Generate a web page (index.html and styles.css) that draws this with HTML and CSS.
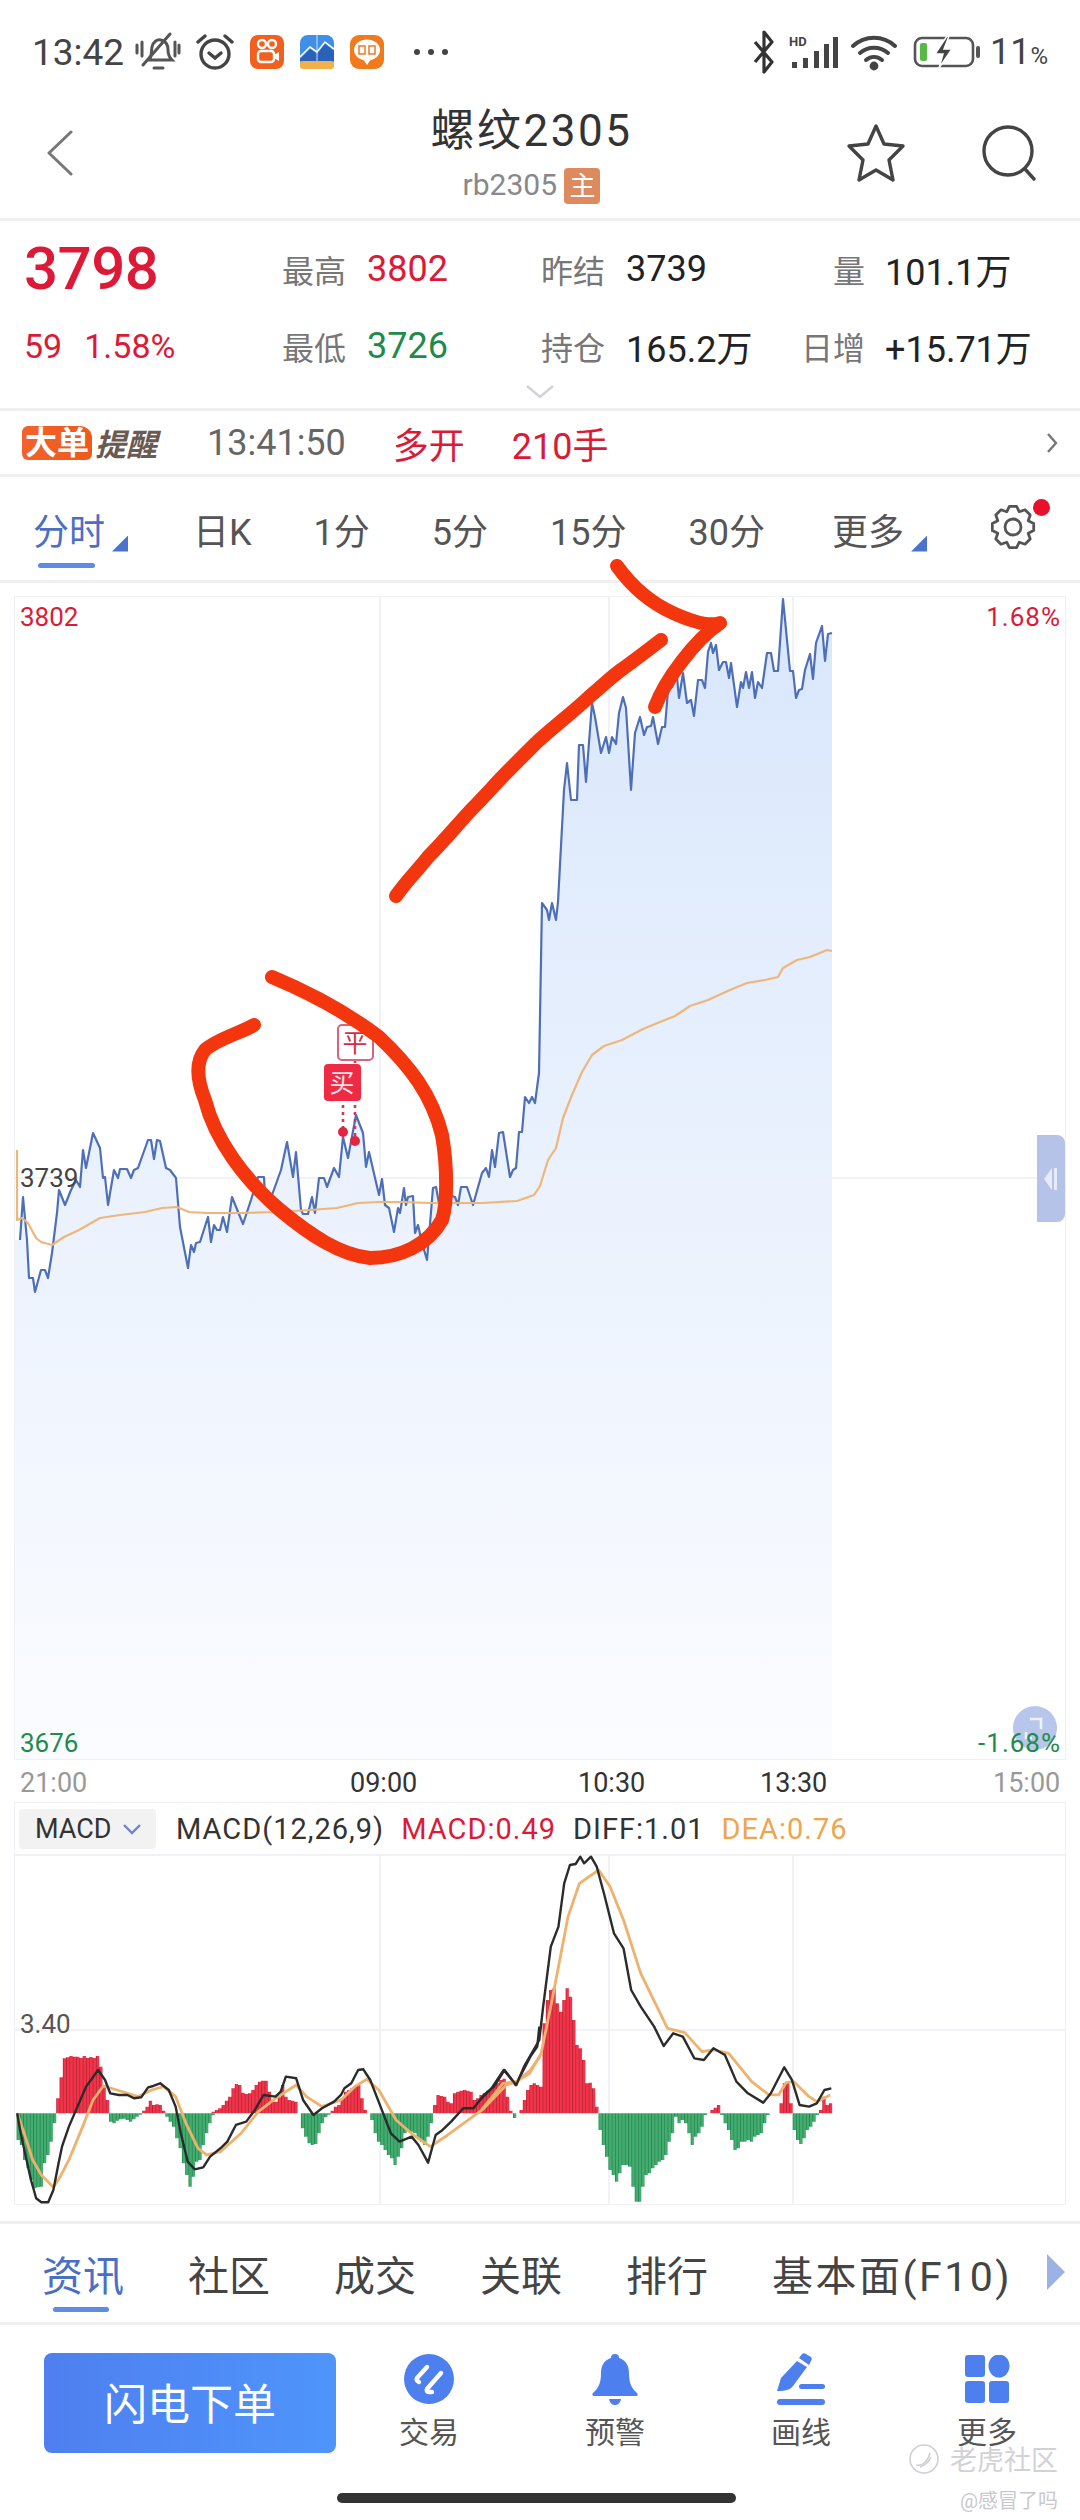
FILE: index.html
```html
<!DOCTYPE html>
<html lang="zh-CN">
<head>
    <meta charset="UTF-8">
    <meta name="viewport" content="width=device-width, initial-scale=1.0">
    <title>螺纹2305</title>
    <link rel="stylesheet" href="styles.css">
</head>
<body>
<div class="page">

    <!-- status bar -->
    <div class="status">
        <span class="clock">13:42</span>
        <svg class="st-bell" width="46" height="42" viewBox="0 0 46 42" fill="none" stroke="#555" stroke-width="3" stroke-linecap="round">
            <path d="M14 29c3-3 2-8 3-13 1-5 5-8 9-7 5 1 7 5 7 10 0 4 1 7 4 10z"/>
            <path d="M8 34L35 3"/><path d="M2 14v8M7 11v14M40 11v14M44 14v8"/><path d="M19 37h9"/>
        </svg>
        <svg class="st-alarm" width="38" height="38" viewBox="0 0 38 38" fill="none" stroke="#444" stroke-width="3.4" stroke-linecap="round">
            <circle cx="19" cy="21" r="14"/><path d="M13 20l6 5 6-5"/><path d="M2 9l7-6M36 9l-7-6"/>
        </svg>
        <svg class="st-app" width="34" height="34" viewBox="0 0 34 34">
            <rect width="34" height="34" rx="8" fill="#f2601f"/>
            <circle cx="12" cy="9" r="4" fill="none" stroke="#fff" stroke-width="2.4"/>
            <circle cx="22" cy="9" r="4" fill="none" stroke="#fff" stroke-width="2.4"/>
            <rect x="8" y="16" width="16" height="11" rx="3" fill="none" stroke="#fff" stroke-width="2.4"/>
            <path d="M24 20l5-3v9l-5-3z" fill="#fff"/>
        </svg>
        <svg class="st-app" width="34" height="34" viewBox="0 0 34 34">
            <rect width="34" height="34" rx="8" fill="#3f8fe6"/>
            <rect y="26" width="34" height="8" rx="3" fill="#f2b04a"/>
            <path d="M0 24l10-10 7 5 8-10 9 7v10H0z" fill="#2a62b8"/>
            <path d="M0 22l10-10 7 5 8-10 9 7" fill="none" stroke="#fff" stroke-width="1.6"/>
            <path d="M17 0v26" stroke="#cfe3f8" stroke-width="1"/>
        </svg>
        <svg class="st-app" width="34" height="34" viewBox="0 0 34 34">
            <rect width="34" height="34" rx="9" fill="#f07a1c"/>
            <ellipse cx="17" cy="15" rx="13" ry="10.5" fill="#fff"/>
            <path d="M13 24l4 6 4-6z" fill="#fff"/>
            <path d="M9 11h6v8H9zM19 11h6v8h-6z" fill="none" stroke="#ee7a2a" stroke-width="1.5"/>
        </svg>
        <span class="st-dots"><i></i><i></i><i></i></span>
        <span class="st-fill"></span>
        <svg width="24" height="46" viewBox="0 0 24 46" fill="none" stroke="#333" stroke-width="3.2" stroke-linejoin="round">
            <path d="M3 13l17 20-8 10V3l8 10L3 33"/>
        </svg>
        <svg class="st-signal" width="50" height="36" viewBox="0 0 50 36">
            <text x="0" y="12" class="st-hd">HD</text>
            <path d="M3 28h5v6H3zM14 24h5v10h-5zM25 17h5v17h-5zM35 10h5v24h-5zM44 3h5v31h-5z" fill="#444"/>
        </svg>
        <svg class="st-wifi" width="46" height="38" viewBox="0 0 46 38" fill="none" stroke="#444" stroke-width="4" stroke-linecap="round">
            <path d="M2 13c12-11 30-11 42 0"/><path d="M9 20c8-7 20-7 28 0"/><path d="M15 27c5-4 11-4 16 0"/>
            <circle cx="23" cy="33" r="2.4" fill="#444"/>
        </svg>
        <svg class="st-batt" width="68" height="32" viewBox="0 0 68 32">
            <rect x="2" y="2" width="58" height="28" rx="7" fill="none" stroke="#555" stroke-width="2.6"/>
            <rect x="7" y="7" width="7" height="18" rx="2" fill="#58b947"/>
            <rect x="63" y="10" width="4" height="12" rx="2" fill="#555"/>
            <path d="M34 0L22 18h8l-4 14 13-19h-8l5-13z" fill="#444" stroke="#fff" stroke-width="1.5"/>
        </svg>
        <span class="st-pct">11<small>%</small></span>
    </div>

    <!-- title -->
    <div class="topbar">
        <svg class="back" width="26" height="46" viewBox="0 0 26 46" fill="none" stroke="#777" stroke-width="3" stroke-linecap="round" stroke-linejoin="round">
            <path d="M24 2L2 23l22 21"/>
        </svg>
        <div class="topbar-title">
            <div class="name">螺纹2305</div>
            <div class="code">rb2305 <span class="main-tag">主</span></div>
        </div>
        <svg class="star" width="60" height="60" viewBox="0 0 60 60" fill="none" stroke="#444" stroke-width="3.4" stroke-linejoin="round">
            <path d="M30 3l8 18 19 2-14 14 4 20-17-10-17 10 4-20L3 23l19-2z"/>
        </svg>
        <svg class="search" width="56" height="56" viewBox="0 0 56 56" fill="none" stroke="#444" stroke-width="3.4" stroke-linecap="round">
            <circle cx="26" cy="26" r="24"/><path d="M43 44l9 10"/>
        </svg>
    </div>

    <!-- quote block -->
    <div class="quote">
        <div class="quote-grid">
            <div class="price red">3798</div>
            <div class="q-label">最高</div><div class="q-val red">3802</div>
            <div class="q-label">昨结</div><div class="q-val">3739</div>
            <div class="q-label q-right">量</div><div class="q-val">101.1万</div>
            <div class="change red"><span>59</span><span>1.58%</span></div>
            <div class="q-label">最低</div><div class="q-val green">3726</div>
            <div class="q-label">持仓</div><div class="q-val">165.2万</div>
            <div class="q-label q-right">日增</div><div class="q-val">+15.71万</div>
        </div>
        <svg class="more-down" width="30" height="14" viewBox="0 0 30 14" fill="none" stroke="#d2d2d6" stroke-width="2.4">
            <path d="M2 1l13 11L28 1"/>
        </svg>
    </div>

    <!-- big order alert -->
    <div class="alert">
        <span class="alert-tag">大单</span><span class="alert-name">提醒</span>
        <span class="alert-time">13:41:50</span>
        <span class="alert-side">多开</span>
        <span class="alert-qty">210手</span>
        <svg class="alert-go" width="12" height="24" viewBox="0 0 12 24" fill="none" stroke="#777" stroke-width="2.4">
            <path d="M2 3l8 9-8 9"/>
        </svg>
    </div>

    <!-- period tabs -->
    <div class="periods">
        <div class="period active">分时</div><i class="corner"></i>
        <div class="period">日K</div>
        <div class="period">1分</div>
        <div class="period">5分</div>
        <div class="period">15分</div>
        <div class="period">30分</div>
        <div class="period more">更多</div><i class="corner"></i>
        <svg class="gear" width="46" height="50" viewBox="0 0 46 50" fill="none" stroke="#555" stroke-width="2.8" stroke-linejoin="round">
            <path d="M18.4 4.3L25.6 4.3 28.3 9.8 34 7.8 39.2 13 37.2 18.7 42.7 21.4 42.7 28.6 37.2 31.3 39.2 37 34 42.2 28.3 40.2 25.6 45.7 18.4 45.7 15.7 40.2 10 42.2 4.8 37 6.8 31.3 1.3 28.6 1.3 21.4 6.8 18.7 4.8 13 10 7.8 15.7 9.8z"/>
            <circle cx="22" cy="25" r="8"/>
        </svg>
        <i class="gear-dot"></i>
    </div>

    <!-- time-share chart -->
    <div class="chart">
        <svg class="chart-svg" width="1050" height="1162" viewBox="15 597 1050 1162">
            <defs>
                <linearGradient id="areaFill" gradientUnits="userSpaceOnUse" x1="0" y1="600" x2="0" y2="1759">
                    <stop offset="0" stop-color="#d9e7fc"/>
                    <stop offset="1" stop-color="#fbfcff"/>
                </linearGradient>
            </defs>
            <path class="grid-line" d="M380 597V1759M609 597V1759M793 597V1759M15 1178H1065"/>

            <!-- area below the price line -->
            <polygon class="area" points="15,1759 15,1240 20,1240 23,1197 27,1240 29,1278 33,1278 35,1292 41,1270 45,1270 48,1278 52,1253 57,1213 59,1190 65,1205 71,1190 76,1180 80,1187 83,1150 86,1168 93,1133 100,1148 103,1178 105,1177 108,1205 114,1170 118,1178 120,1169 127,1169 131,1178 134,1170 138,1168 148,1140 151,1140 154,1159 157,1140 160,1141 166,1168 170,1170 176,1178 180,1227 188,1268 191,1245 194,1252 196,1243 200,1242 208,1217 211,1242 214,1225 217,1230 220,1230 223,1217 227,1232 232,1197 243,1224 251,1200 258,1177 264,1177 265,1197 272,1195 281,1170 287,1142 293,1177 296,1152 301,1210 303,1214 308,1214 312,1197 315,1213 319,1178 324,1178 327,1187 334,1168 339,1177 343,1137 348,1158 356,1115 363,1133 366,1167 369,1152 379,1195 382,1179 385,1205 389,1208 394,1232 398,1208 400,1213 404,1188 406,1205 408,1197 413,1196 415,1233 418,1225 422,1243 427,1260 433,1188 436,1187 442,1220 446,1223 449,1195 455,1197 458,1205 461,1187 467,1187 473,1205 482,1173 486,1168 489,1177 492,1150 495,1167 499,1133 503,1132 510,1177 513,1170 516,1168 519,1132 522,1132 525,1097 529,1103 532,1097 535,1103 539,1073 542,903 547,910 549,920 552,903 556,920 558,902 564,790 567,763 571,800 577,800 579,745 583,745 586,782 592,703 595,717 601,753 606,737 609,753 612,737 616,744 619,713 623,697 626,708 631,790 635,733 640,717 644,735 647,727 651,726 653,717 658,744 662,727 665,727 668,690 672,687 677,677 679,698 683,673 687,703 691,700 694,716 698,680 702,680 705,688 708,652 711,643 713,653 716,645 719,670 723,662 726,662 729,678 731,663 737,707 741,682 743,688 746,672 749,688 752,672 755,698 758,682 762,688 767,653 771,653 774,671 778,671 783,599 790,671 793,671 796,698 799,690 802,689 805,670 810,654 813,679 816,643 822,626 825,661 828,634 832,633 832,1759"/>
            <polyline class="price-line" points="20,1240 23,1197 27,1240 29,1278 33,1278 35,1292 41,1270 45,1270 48,1278 52,1253 57,1213 59,1190 65,1205 71,1190 76,1180 80,1187 83,1150 86,1168 93,1133 100,1148 103,1178 105,1177 108,1205 114,1170 118,1178 120,1169 127,1169 131,1178 134,1170 138,1168 148,1140 151,1140 154,1159 157,1140 160,1141 166,1168 170,1170 176,1178 180,1227 188,1268 191,1245 194,1252 196,1243 200,1242 208,1217 211,1242 214,1225 217,1230 220,1230 223,1217 227,1232 232,1197 243,1224 251,1200 258,1177 264,1177 265,1197 272,1195 281,1170 287,1142 293,1177 296,1152 301,1210 303,1214 308,1214 312,1197 315,1213 319,1178 324,1178 327,1187 334,1168 339,1177 343,1137 348,1158 356,1115 363,1133 366,1167 369,1152 379,1195 382,1179 385,1205 389,1208 394,1232 398,1208 400,1213 404,1188 406,1205 408,1197 413,1196 415,1233 418,1225 422,1243 427,1260 433,1188 436,1187 442,1220 446,1223 449,1195 455,1197 458,1205 461,1187 467,1187 473,1205 482,1173 486,1168 489,1177 492,1150 495,1167 499,1133 503,1132 510,1177 513,1170 516,1168 519,1132 522,1132 525,1097 529,1103 532,1097 535,1103 539,1073 542,903 547,910 549,920 552,903 556,920 558,902 564,790 567,763 571,800 577,800 579,745 583,745 586,782 592,703 595,717 601,753 606,737 609,753 612,737 616,744 619,713 623,697 626,708 631,790 635,733 640,717 644,735 647,727 651,726 653,717 658,744 662,727 665,727 668,690 672,687 677,677 679,698 683,673 687,703 691,700 694,716 698,680 702,680 705,688 708,652 711,643 713,653 716,645 719,670 723,662 726,662 729,678 731,663 737,707 741,682 743,688 746,672 749,688 752,672 755,698 758,682 762,688 767,653 771,653 774,671 778,671 783,599 790,671 793,671 796,698 799,690 802,689 805,670 810,654 813,679 816,643 822,626 825,661 828,634 832,633"/>
            <polyline class="avg-line" points="17,1150 17,1220 22,1218 28,1223 36,1238 41,1242 52,1245 64,1237 79,1230 93,1222 100,1218 120,1215 145,1212 162,1208 177,1207 189,1212 207,1213 241,1213 275,1212 310,1210 337,1208 358,1203 379,1202 403,1202 430,1203 448,1203 482,1203 517,1201 534,1195 540,1186 548,1160 556,1148 563,1118 572,1095 582,1072 592,1055 604,1046 622,1040 643,1029 660,1022 675,1016 690,1006 708,1000 730,990 747,983 765,980 778,977 783,968 797,960 810,957 827,950 832,951"/>

            <!-- trade markers -->
            <path class="mark-dots" d="M343 1105V1130M355 1105V1140M355 1060V1064"/>
            <circle class="mark-dot" cx="343" cy="1132" r="5"/>
            <circle class="mark-dot" cx="355" cy="1141" r="5"/>
            <rect class="mark-close" x="338" y="1025" width="35" height="35" rx="4"/>
            <text class="mark-close-text" x="355" y="1052">平</text>
            <rect class="mark-buy" x="324" y="1064" width="37" height="37" rx="4"/>
            <text class="mark-buy-text" x="342" y="1092">买</text>

            <circle class="float-btn" cx="1035" cy="1728" r="22"/>
            <path class="float-glyph" d="M1030 1719h11v10M1032 1738h-6v-6"/>
        </svg>

        <!-- hand drawn annotation, runs over the tabs above -->
        <svg class="overlay" width="1080" height="1300" viewBox="0 500 1080 1300">
            <path class="scribble" d="M396 896C407 880 418 870 428 857C443 842 458 824 471 810C485 796 497 782 509 770L536 743C553 727 571 714 589 697C600 688 610 678 621 670C635 660 648 650 661 640"/>
            <path class="scribble" d="M617 566Q640 598 673 613T720 623C695 640 665 680 655 707"/>
            <path class="scribble" d="M272 977C315 995 350 1015 379 1037C410 1066 432 1095 442 1135C448 1170 447 1205 442 1220C428 1245 400 1258 370 1258C340 1255 310 1235 280 1210C245 1180 215 1140 205 1100C195 1075 197 1060 205 1050C215 1040 240 1033 254 1025"/>
        </svg>

        <span class="axis axis-tl red">3802</span>
        <span class="axis axis-tr red">1.68%</span>
        <span class="axis axis-ml">3739</span>
        <span class="axis axis-bl green">3676</span>
        <span class="axis axis-br green">-1.68%</span>
        <div class="handle">
            <svg width="14" height="26" viewBox="0 0 14 26" fill="#e6ecfa"><path d="M8 2v22L0 13z"/><path d="M10 2h3v22h-3z"/></svg>
        </div>
    </div>

    <div class="times">
        <span class="muted">21:00</span>
        <span class="t-0900">09:00</span>
        <span class="t-1030">10:30</span>
        <span class="t-1330">13:30</span>
        <span class="muted t-1500">15:00</span>
    </div>

    <!-- MACD -->
    <div class="macd-head">
        <div class="macd-chip">MACD
            <svg width="20" height="12" viewBox="0 0 20 12" fill="none" stroke="#6f83c9" stroke-width="2.4"><path d="M2 2l8 8 8-8"/></svg>
        </div>
        <span>MACD(12,26,9)</span>
        <span class="red">MACD:0.49</span>
        <span>DIFF:1.01</span>
        <span class="orange">DEA:0.76</span>
    </div>
    <div class="macd">
        <svg class="chart-svg" width="1050" height="349" viewBox="15 1855 1050 349">
            <defs>
                <pattern id="red6" patternUnits="userSpaceOnUse" width="9.6" height="10">
                    <rect width="9.6" height="10" fill="#f2344a"/><rect width="1.8" height="10" fill="#a91f30"/>
                </pattern>
                <pattern id="green6" patternUnits="userSpaceOnUse" width="9.6" height="10">
                    <rect width="9.6" height="10" fill="#43ad70"/><rect width="1.8" height="10" fill="#1f7a48"/>
                </pattern>
                <pattern id="red7" patternUnits="userSpaceOnUse" width="8.6" height="10">
                    <rect width="8.6" height="10" fill="#f2344a"/><rect width="1.6" height="10" fill="#a91f30"/>
                </pattern>
                <pattern id="green7" patternUnits="userSpaceOnUse" width="8.6" height="10">
                    <rect width="8.6" height="10" fill="#43ad70"/><rect width="1.6" height="10" fill="#1f7a48"/>
                </pattern>
            </defs>
            <path class="grid-line" d="M380 1855V2204M609 1855V2204M793 1855V2204M15 2030H1065"/>

            <g transform="translate(0 1840) scale(.3444 .3333)">
                <path fill="url(#red6)" d="M163.2 820V775h9.6V712h9.6V655h9.6V652h9.6V648h9.6V650h9.6V650h9.6V654h9.6V648h9.6V654h9.6V651h9.6V654h9.6V648h9.6V680h9.6V735h9.6V780h9.6V820z
                    M412.8 820V812h9.6V800h9.6V782h9.6V795h9.6V793h9.6V795h9.6V812h9.6V820z
                    M614.4 820V815h9.6V810h9.6V805h9.6V795h9.6V782h9.6V770h9.6V745h9.6V732h9.6V735h9.6V758h9.6V762h9.6V760h9.6V750h9.6V735h9.6V725h9.6V722h9.6V722h9.6V755h9.6V785h9.6V785h9.6V772h9.6V735h9.6V770h9.6V780h9.6V782h9.6V785h9.6V820z
                    M960 820V812h9.6V800h9.6V795h9.6V775h9.6V755h9.6V750h9.6V745h9.6V740h9.6V735h9.6V775h9.6V810h9.6V820z
                    M1257.6 820V795h9.6V765h9.6V768h9.6V770h9.6V785h9.6V790h9.6V760h9.6V755h9.6V752h9.6V750h9.6V752h9.6V755h9.6V780h9.6V775h9.6V765h9.6V760h9.6V752h9.6V750h9.6V740h9.6V730h9.6V720h9.6V716h9.6V770h9.6V812h9.6V820z"/>
                <path fill="url(#green6)" d="M48 820V900h9.6V915h9.6V960h9.6V985h9.6V1020h9.6V1045h9.6V1042h9.6V1040h9.6V970h9.6V945h9.6V905h9.6V850h9.6V820z
                    M316.8 820V845h9.6V850h9.6V842h9.6V838h9.6V836h9.6V840h9.6V845h9.6V838h9.6V830h9.6V824h9.6V820z
                    M480 820V830h9.6V845h9.6V860h9.6V895h9.6V925h9.6V970h9.6V1005h9.6V1040h9.6V1010h9.6V965h9.6V960h9.6V915h9.6V880h9.6V850h9.6V826h9.6V820z
                    M873.6 820V865h9.6V890h9.6V910h9.6V915h9.6V912h9.6V880h9.6V850h9.6V832h9.6V824h9.6V820z
                    M1075.2 820V840h9.6V880h9.6V905h9.6V915h9.6V930h9.6V945h9.6V955h9.6V975h9.6V950h9.6V925h9.6V880h9.6V870h9.6V875h9.6V880h9.6V895h9.6V905h9.6V915h9.6V890h9.6V850h9.6V820z"/>
                <polyline class="dea" points="50,820 70,880 95,960 120,1005 155,1042 175,1010 200,960 240,860 270,780 300,738 340,750 400,770 440,750 475,740 510,770 540,850 575,925 600,945 640,935 700,880 750,815 800,775 860,735 890,770 935,800 990,780 1030,740 1065,718 1100,750 1150,840 1200,885 1250,920 1300,885 1400,810 1470,735 1500,725 1540,690 1568,650"/>
                <polyline class="diff" points="50,820 60,880 75,950 90,1020 105,1075 120,1087 140,1087 155,1050 170,970 180,920 200,860 225,800 250,740 285,690 305,720 320,760 345,765 370,765 390,775 410,772 430,742 445,738 465,730 490,750 510,800 525,880 545,965 565,988 590,982 610,950 640,925 660,905 685,855 715,845 740,810 765,765 800,770 815,755 830,710 860,715 880,780 910,825 935,805 970,785 990,765 1000,745 1020,730 1040,690 1055,688 1075,720 1105,800 1135,880 1160,905 1195,890 1215,915 1243,968 1265,885 1285,870 1310,845 1345,805 1375,805 1405,765 1435,740 1465,690 1480,710 1497,735 1520,690 1540,650 1560,620 1566,560"/>
            </g>

            <g transform="translate(480 1840) scale(.3827 .3333)">
                <path fill="url(#red7)" d="M103.2 820V810h8.6V780h8.6V750h8.6V735h8.6V730h8.6V735h8.6V740h8.6V550h8.6V480h8.6V450h8.6V445h8.6V490h8.6V515h8.6V480h8.6V445h8.6V470h8.6V540h8.6V615h8.6V625h8.6V660h8.6V730h8.6V728h8.6V745h8.6V800h8.6V820z
                    M602 820V810h8.6V803h8.6V795h8.6V820z
                    M782.6 820V790h8.6V730h8.6V725h8.6V790h8.6V820z
                    M885.8 820V810h8.6V770h8.6V795h8.6V790h8.6V820z"/>
                <path fill="url(#green7)" d="M86 820V834h8.6V820z
                    M309.6 820V870h8.6V915h8.6V950h8.6V990h8.6V1005h8.6V1025h8.6V1000h8.6V975h8.6V975h8.6V980h8.6V1040h8.6V1085h8.6V1085h8.6V1040h8.6V1005h8.6V1000h8.6V985h8.6V975h8.6V965h8.6V960h8.6V945h8.6V905h8.6V880h8.6V830h8.6V850h8.6V840h8.6V850h8.6V880h8.6V915h8.6V890h8.6V880h8.6V860h8.6V825h8.6V820z
                    M627.8 820V825h8.6V850h8.6V870h8.6V900h8.6V930h8.6V925h8.6V905h8.6V905h8.6V900h8.6V905h8.6V890h8.6V885h8.6V880h8.6V850h8.6V825h8.6V820z
                    M817 820V870h8.6V900h8.6V912h8.6V895h8.6V870h8.6V860h8.6V845h8.6V825h8.6V820z"/>
                <polyline class="dea" points="0,815 60,730 95,725 130,700 160,640 190,470 230,230 260,130 310,90 340,140 375,240 420,400 490,565 535,578 580,635 610,630 650,640 710,725 755,765 780,765 800,728 820,725 860,770 880,785 915,765"/>
                <polyline class="diff" points="0,780 30,745 62,690 80,715 95,735 115,680 130,650 155,600 165,500 185,320 205,260 220,130 235,75 250,72 262,50 272,70 290,50 305,80 325,165 350,280 375,325 395,450 420,500 455,560 480,618 505,580 530,590 560,655 585,660 610,625 640,645 670,725 700,760 740,788 760,760 795,682 815,720 835,795 860,800 880,790 900,750 918,745"/>
            </g>
        </svg>
        <span class="macd-level">3.40</span>
    </div>

    <!-- info tabs -->
    <div class="infotabs">
        <div class="infotab active">资讯</div>
        <div class="infotab">社区</div>
        <div class="infotab">成交</div>
        <div class="infotab">关联</div>
        <div class="infotab">排行</div>
        <div class="infotab f10">基本面(F10)</div>
        <i class="tab-arrow"></i>
    </div>

    <!-- actions -->
    <div class="actions">
        <div class="flash">闪电下单</div>
        <div class="action">
            <svg width="52" height="52" viewBox="0 0 52 52">
                <circle cx="26" cy="26" r="25" fill="#4d80ee"/>
                <path d="M24 14L14 25c-1 2 0 3 2 4M38 20L24 36c-1 2 0 3 2 3h3" fill="none" stroke="#fff" stroke-width="4.4" stroke-linecap="round"/>
            </svg>
            <span>交易</span>
        </div>
        <div class="action">
            <svg width="52" height="52" viewBox="0 0 52 52" fill="#4d80ee">
                <path d="M26 1a4 4 0 0 1 4 4c7 2 10 8 10 15 0 9 2 15 8 20 1 1 1 3-1 3H5c-2 0-2-2-1-3 6-5 8-11 8-20 0-7 3-13 10-15a4 4 0 0 1 4-4z"/>
                <path d="M20 46h12c-1 5-4 6-6 6s-5-1-6-6z"/>
            </svg>
            <span>预警</span>
        </div>
        <div class="action">
            <svg width="52" height="52" viewBox="0 0 52 52" fill="#4d80ee">
                <path d="M2 38l4-13L22 8l10 6-14 19c-2 3-6 5-16 5z"/>
                <path d="M24 5l3-4c1-1 3-1 4 0l5 3c1 1 1 3 0 4l-2 4z"/>
                <rect x="24" y="31" width="26" height="5" rx="2.5"/>
                <rect x="2" y="46" width="48" height="6" rx="3"/>
            </svg>
            <span>画线</span>
        </div>
        <div class="action">
            <svg class="action-grid" width="46" height="48" viewBox="0 0 46 48" fill="#4d80ee">
                <rect x="1" y="0" width="20" height="22" rx="3"/>
                <ellipse cx="35" cy="11" rx="10.5" ry="11.5"/>
                <rect x="1" y="26" width="20" height="22" rx="3"/>
                <rect x="25" y="26" width="20" height="22" rx="3"/>
            </svg>
            <span>更多</span>
        </div>
    </div>

    <!-- community watermark and gesture bar -->
    <div class="watermark">
        <svg width="32" height="32" viewBox="0 0 32 32" fill="none" stroke="#d0d0d4" stroke-width="1.6">
            <circle cx="16" cy="16" r="14"/><path d="M8 22c6 2 12-4 14-12M12 24c4-1 9-5 11-10"/>
        </svg>
        <span>老虎社区</span>
    </div>
    <div class="watermark-user">@感冒了吗</div>
    <div class="home-bar"></div>
</div>
</body>
</html>
```

FILE: styles.css
```css
* {
    box-sizing: border-box;
}
body {
    margin: 0;
    background: #fff;
    font-family: Roboto, "Noto Sans CJK SC", sans-serif;
    color: #222;
}
.page {
    position: relative;
    width: 1080px;
    height: 2520px;
    overflow: hidden;
    background: #fff;
}
.red { color: #dc1a38; }
.green { color: #1f8a4c; }
.orange { color: #eea54e; }
.muted { color: #999; }

/* status bar */
.status {
    display: flex;
    align-items: center;
    height: 88px;
    padding: 16px 32px 0 32px;
}
.clock {
    font-size: 37px;
    color: #444;
    width: 103px;
}
.st-alarm { margin-left: 15px; }
.st-app { margin-left: 16px; }
.st-dots {
    display: flex;
    gap: 8px;
    margin-left: 30px;
}
.st-dots i {
    width: 6px;
    height: 6px;
    border-radius: 50%;
    background: #444;
}
.st-fill { flex: 1; }
.st-hd {
    font-size: 13px;
    font-weight: 700;
    fill: #444;
}
.st-signal { margin-left: 13px; }
.st-wifi { margin-left: 12px; }
.st-batt { margin-left: 16px; }
.st-pct {
    font-size: 36px;
    color: #444;
    margin-left: 9px;
}
.st-pct small { font-size: 24px; }

/* title */
.topbar {
    display: flex;
    align-items: center;
    height: 133px;
    padding: 0 42px 0 47px;
    border-bottom: 3px solid #f0f0f2;
}
.topbar-title {
    flex: 1;
    text-align: center;
    padding-left: 164px;
    padding-right: 20px;
}
.name {
    font-size: 44px;
    line-height: 60px;
    letter-spacing: 2.5px;
    color: #333;
}
.code {
    font-size: 30px;
    line-height: 40px;
    color: #888;
    margin-top: 4px;
}
.main-tag {
    display: inline-block;
    width: 36px;
    height: 36px;
    line-height: 36px;
    border-radius: 4px;
    background: #dd8a5e;
    color: #fff;
    font-size: 26px;
    text-align: center;
}
.search { margin-left: 76px; }

/* quote */
.quote {
    height: 190px;
    border-bottom: 3px solid #f0f0f2;
}
.quote-grid {
    display: grid;
    grid-template-columns: 258px 65px 194px 65px 194px 65px 1fr;
    grid-template-rows: 77px 77px;
    align-items: center;
    padding: 9px 0 0 24px;
}
.price {
    font-size: 60px;
    font-weight: 500;
    letter-spacing: -0.5px;
}
.change {
    display: flex;
    gap: 22px;
    font-size: 34px;
}
.q-label {
    font-size: 32px;
    color: #777;
    white-space: nowrap;
}
.q-right { text-align: right; }
.q-val {
    font-size: 36px;
    padding-left: 20px;
}
.more-down {
    display: block;
    margin: 1px auto 0;
}

/* alert */
.alert {
    display: flex;
    align-items: center;
    height: 66px;
    padding-left: 22px;
    border-bottom: 3px solid #f0f0f2;
}
.alert-tag {
    width: 70px;
    height: 34px;
    line-height: 34px;
    border-radius: 6px 12px 6px 6px;
    background: linear-gradient(90deg, #f2622a, #ef5a1c);
    color: #fff;
    font-size: 32px;
    font-weight: 700;
    text-align: center;
}
.alert-name {
    margin-left: 3px;
    font-size: 31px;
    font-weight: 700;
    font-style: italic;
    color: #6b5a50;
}
.alert-time {
    margin-left: 50px;
    font-size: 36px;
    color: #666;
}
.alert-side {
    margin-left: 47px;
    font-size: 36px;
    color: #dc1a38;
}
.alert-qty {
    margin-left: 47px;
    font-size: 36px;
    color: #dc1a38;
}
.alert-go {
    margin-left: auto;
    margin-right: 22px;
}

/* period tabs */
.periods {
    display: flex;
    align-items: center;
    position: relative;
    height: 106px;
    padding-left: 33px;
    border-bottom: 3px solid #f0f0f2;
    gap: 62px;
    font-size: 36px;
    color: #555;
}
.period { position: relative; }
.period.more { margin-left: 5px; }
.period.active { color: #4b6fc4; }
.period.active::after {
    content: "";
    position: absolute;
    left: 5px;
    right: 10px;
    bottom: -13px;
    height: 5px;
    border-radius: 3px;
    background: #5d8be6;
}
.corner {
    width: 16px;
    height: 16px;
    margin: 30px 3px 0 -55px;
    background: #4a73cc;
    clip-path: polygon(100% 0, 100% 100%, 0 100%);
}
.gear { margin: -3px 0 0 -1px; }
.gear-dot {
    position: absolute;
    left: 1033px;
    top: 22px;
    width: 17px;
    height: 17px;
    border-radius: 50%;
    background: #e8102a;
}

/* chart */
.chart {
    position: relative;
    width: 1050px;
    height: 1162px;
    margin: 14px 0 0 15px;
    outline: 1px solid #f0f1f5;
}
.chart-svg {
    display: block;
}
.overlay {
    position: absolute;
    left: -15px;
    top: -97px;
    pointer-events: none;
}
.grid-line {
    fill: none;
    stroke: #eceef3;
    stroke-width: 1.5;
}
.area { fill: url(#areaFill); }
.price-line {
    fill: none;
    stroke: #4e6fb8;
    stroke-width: 2.2;
    stroke-linejoin: round;
}
.avg-line {
    fill: none;
    stroke: #eeb679;
    stroke-width: 2.2;
    stroke-linejoin: round;
}
.mark-dots {
    fill: none;
    stroke: #c93a5a;
    stroke-width: 2.6;
    stroke-dasharray: 3 4;
}
.mark-dot { fill: #e5233f; }
.mark-close {
    fill: #fff;
    stroke: #d8657c;
    stroke-width: 2;
}
.mark-close-text {
    fill: #d02f4a;
    font-size: 25px;
    text-anchor: middle;
}
.mark-buy { fill: #ee2a45; }
.mark-buy-text {
    fill: #fde6ea;
    font-size: 25px;
    text-anchor: middle;
}
.float-btn { fill: #b7c6ea; }
.float-glyph {
    fill: none;
    stroke: #eef2fb;
    stroke-width: 2.6;
}
.scribble {
    fill: none;
    stroke: #f4360f;
    stroke-width: 14;
    stroke-linecap: round;
    stroke-linejoin: round;
}
.axis {
    position: absolute;
    font-size: 26px;
    line-height: 30px;
}
.axis-tl { left: 5px; top: 5px; }
.axis-tr { right: 4px; top: 5px; letter-spacing: 1px; }
.axis-ml { left: 5px; top: 566px; color: #444; }
.axis-bl { left: 5px; bottom: 1px; }
.axis-br { right: 4px; bottom: 1px; letter-spacing: 1px; }
.handle {
    position: absolute;
    right: 0;
    top: 538px;
    width: 28px;
    height: 87px;
    display: flex;
    align-items: center;
    justify-content: center;
    border-radius: 0 8px 8px 0;
    background: #b5c3e8;
}

/* time axis */
.times {
    position: relative;
    height: 44px;
    font-size: 27px;
    line-height: 48px;
    color: #333;
    padding-left: 20px;
}
.times span { position: absolute; top: 0; }
.t-0900 { left: 350px; }
.t-1030 { left: 578px; }
.t-1330 { left: 760px; }
.t-1500 { left: 993px; }

/* MACD */
.macd-head {
    display: flex;
    align-items: center;
    gap: 17px;
    height: 52px;
    margin: 0 15px;
    padding-left: 4px;
    font-size: 29px;
    letter-spacing: 1px;
    color: #333;
    outline: 1px solid #f0f1f5;
}
.macd-chip {
    display: flex;
    align-items: center;
    gap: 10px;
    width: 137px;
    height: 40px;
    margin-right: 3px;
    padding-left: 16px;
    border-radius: 4px;
    background: #f2f2f3;
    font-size: 27px;
    letter-spacing: 0;
}
.macd {
    position: relative;
    width: 1050px;
    height: 349px;
    margin-left: 15px;
    outline: 1px solid #f0f1f5;
}
.dea {
    fill: none;
    stroke: #eeb26e;
    stroke-width: 2.8;
    vector-effect: non-scaling-stroke;
    stroke-linejoin: round;
}
.diff {
    fill: none;
    stroke: #2b2b2b;
    stroke-width: 2.4;
    vector-effect: non-scaling-stroke;
    stroke-linejoin: round;
}
.macd-level {
    position: absolute;
    left: 5px;
    top: 154px;
    font-size: 26px;
    line-height: 30px;
    color: #555;
}

/* info tabs */
.infotabs {
    display: flex;
    align-items: center;
    position: relative;
    height: 104px;
    margin-top: 17px;
    padding-left: 42px;
    gap: 64px;
    border-top: 3px solid #f0f0f2;
    border-bottom: 3px solid #f0f0f2;
    font-size: 41px;
    color: #444;
}
.infotab { position: relative; }
.infotab.f10 { letter-spacing: 2.5px; }
.infotab.active { color: #4b6fc4; }
.infotab.active::after {
    content: "";
    position: absolute;
    left: 11px;
    right: 15px;
    bottom: -9px;
    height: 5px;
    border-radius: 3px;
    background: #5d8be6;
}
.tab-arrow {
    position: absolute;
    left: 1047px;
    top: 30px;
    width: 18px;
    height: 36px;
    background: #9db2e4;
    clip-path: polygon(0 0, 100% 50%, 0 100%);
}

/* actions */
.actions {
    display: flex;
    align-items: flex-start;
    padding: 28px 0 0 44px;
}
.flash {
    width: 292px;
    height: 100px;
    padding-top: 4px;
    line-height: 96px;
    border-radius: 8px;
    background: linear-gradient(90deg, #4f7ff0, #4e95fb);
    color: #fff;
    font-size: 43px;
    text-align: center;
}
.action {
    flex: 1;
    display: flex;
    flex-direction: column;
    align-items: center;
    gap: 8px;
    font-size: 30px;
    line-height: 40px;
    color: #555;
}
.action-grid { margin: 2px 0; }
.watermark {
    position: absolute;
    left: 908px;
    top: 2439px;
    display: flex;
    align-items: center;
    gap: 10px;
    font-size: 27px;
    color: #d2d2d6;
}
.watermark-user {
    position: absolute;
    right: 22px;
    top: 2485px;
    font-size: 20px;
    color: #c9c9cd;
}
.home-bar {
    position: absolute;
    left: 337px;
    top: 2493px;
    width: 399px;
    height: 10px;
    border-radius: 5px;
    background: #333;
}
```
